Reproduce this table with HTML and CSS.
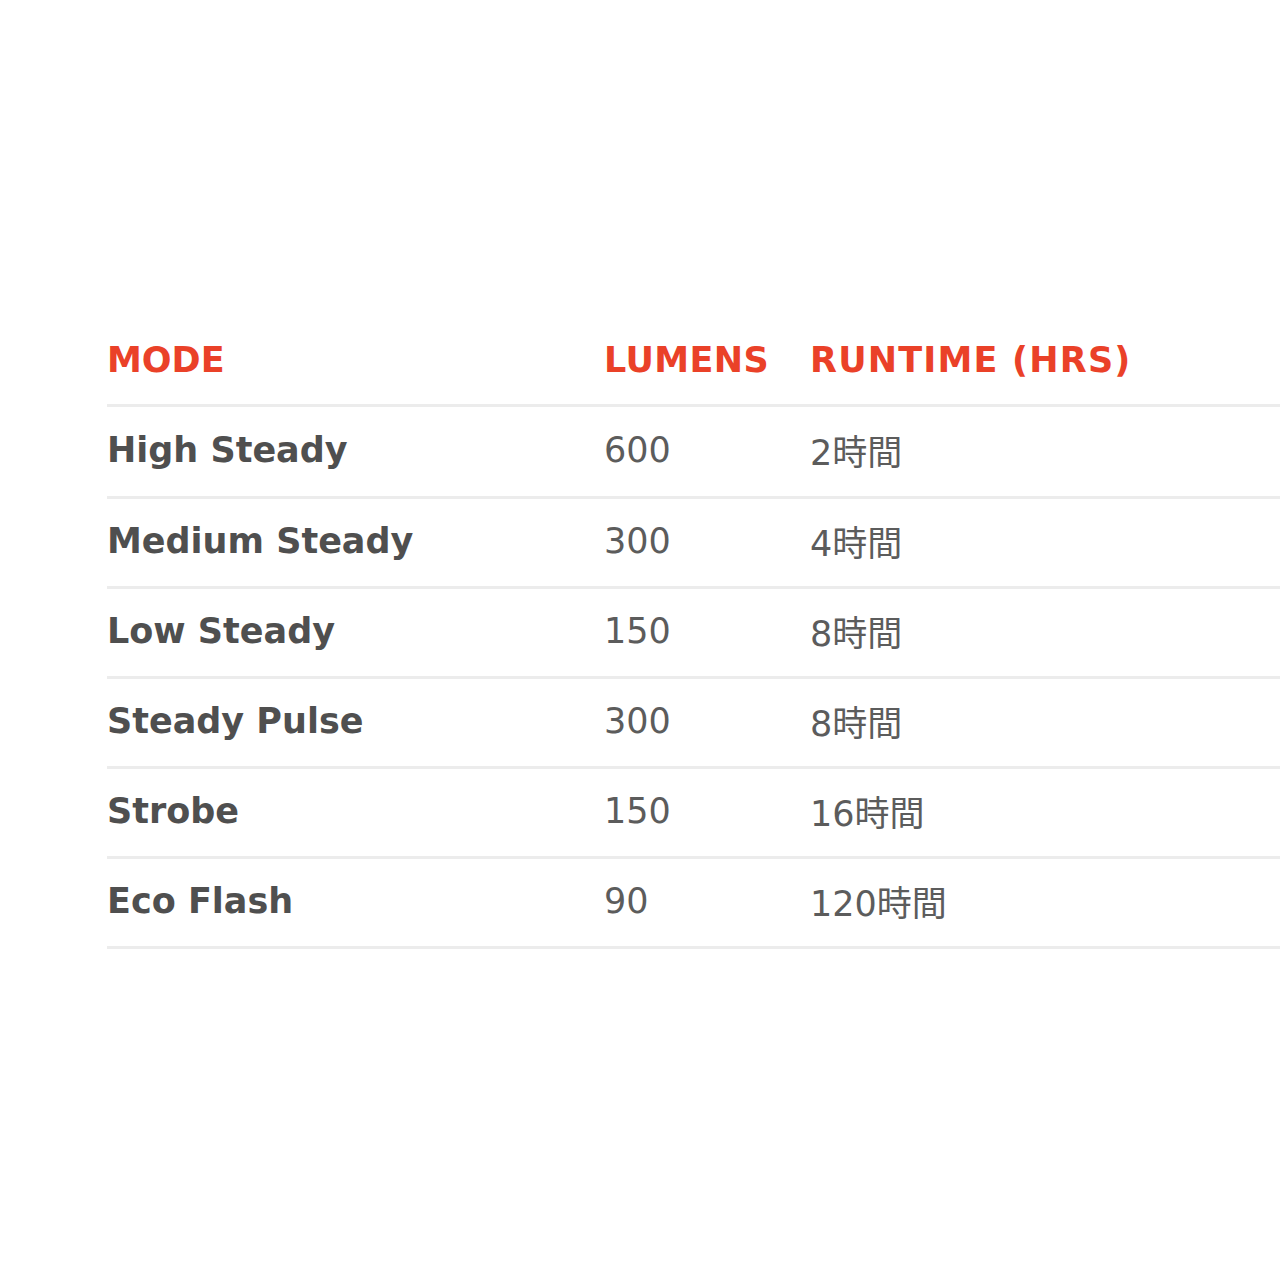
FILE: index.html
```html
<!DOCTYPE html>
<html lang="en">
<head>
<meta charset="utf-8">
<title>Modes</title>
<link rel="stylesheet" href="styles.css">
</head>
<body>
<div class="page">
  <table class="modes">
    <thead>
      <tr>
        <th class="c-mode">MODE</th>
        <th class="c-lum">LUMENS</th>
        <th class="c-run">RUNTIME (HRS)</th>
      </tr>
    </thead>
    <tbody>
      <tr><td class="name">High Steady</td><td class="num">600</td><td class="num">2時間</td></tr>
      <tr><td class="name">Medium Steady</td><td class="num">300</td><td class="num">4時間</td></tr>
      <tr><td class="name">Low Steady</td><td class="num">150</td><td class="num">8時間</td></tr>
      <tr><td class="name">Steady Pulse</td><td class="num">300</td><td class="num">8時間</td></tr>
      <tr><td class="name">Strobe</td><td class="num">150</td><td class="num">16時間</td></tr>
      <tr><td class="name">Eco Flash</td><td class="num">90</td><td class="num">120時間</td></tr>
    </tbody>
  </table>
</div>
</body>
</html>
```

FILE: styles.css
```css
html, body {
  margin: 0;
  padding: 0;
  background: #ffffff;
}

.page {
  padding: 315px 0 0 107px;
  font-family: "DejaVu Sans", Verdana, "Noto Sans CJK JP", sans-serif;
}

.modes {
  width: 100%;
  border-collapse: collapse;
  table-layout: fixed;
}

.modes th,
.modes td {
  height: 83px;
  padding: 0 0 4px 0;
  text-align: left;
  vertical-align: middle;
  border-bottom: 3px solid #ececec;
  white-space: nowrap;
  font-size: 35px;
}

.modes tbody tr:first-child td {
  height: 85px;
}

.modes th {
  height: 89px;
  padding: 0;
  color: #ea4128;
  font-weight: bold;
}

.c-mode { width: 497px; }
.c-lum { width: 206px; }

.c-lum {
  letter-spacing: 0.4px;
}

.c-run {
  letter-spacing: 1.2px;
}

.name {
  color: #4f4f4f;
  font-weight: bold;
}

.num {
  color: #5c5c5c;
  font-weight: normal;
}
```
